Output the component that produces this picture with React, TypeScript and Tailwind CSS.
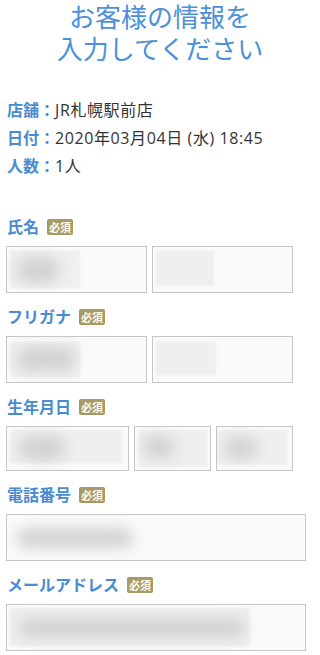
import React from "react";

const font = { fontFamily: '"Open Sans", "Noto Sans CJK JP", sans-serif' };

function Badge() {
  return (
    <span className="ml-[8px] inline-flex h-[16px] w-[26px] items-center justify-center rounded-[2px] bg-[#a89a67] text-[11px] leading-none font-bold text-[#fffbea]">
      必須
    </span>
  );
}

function Label({ text }: { text: string }) {
  return (
    <div className="flex h-[28px] items-center">
      <span className="text-[16px] font-bold leading-none text-[#4a8bd0]">{text}</span>
      <Badge />
    </div>
  );
}

function Field({
  w,
  h = 47,
  blob,
}: {
  w: string;
  h?: number;
  blob: React.ReactNode;
}) {
  return (
    <div className={`${w} relative overflow-hidden border border-[#c6c6c6] bg-[#fafafa]`} style={{ height: h }}>
      {blob}
    </div>
  );
}

const Dark = ({ cls }: { cls: string }) => (
  <div className={`absolute rounded-full bg-[#d2d2d2] blur-[7px] ${cls}`} />
);
const Light = ({ cls }: { cls: string }) => (
  <div className={`absolute bg-[#efefef] blur-[1px] ${cls}`} />
);

export default function App() {
  return (
    <div className="w-[320px] bg-white" style={font}>
      <h1 className="mt-[1px] text-center text-[26px] font-normal text-[#4b90d8]">
        <div className="h-[32px] leading-[32px]">お客様の情報を</div>
        <div className="h-[32px] leading-[32px]">入力してください</div>
      </h1>

      <div className="mt-[31px] pl-[7px] text-[16px] leading-[28px] text-[#333]">
        <div>
          <span className="font-bold text-[#4a8bd0]">店舗：</span>
          <span className="tracking-[0.6px]">JR札幌駅前店</span>
        </div>
        <div>
          <span className="font-bold text-[#4a8bd0]">日付：</span>
          <span className="tracking-[0.6px]">2020年03月04日 (水) 18:45</span>
        </div>
        <div>
          <span className="font-bold text-[#4a8bd0]">人数：</span>
          <span className="tracking-[0.6px]">1人</span>
        </div>
      </div>

      <div className="mt-[33px] pl-[6px]">
        <div className="pl-[1px]">
          <Label text="氏名" />
        </div>
        <div className="mt-[5px] flex gap-[5px]">
          <Field w="w-[141px]" blob={<><Light cls="left-[3px] top-[4px] h-[37px] w-[70px]" /><Dark cls="left-[10px] top-[10px] h-[26px] w-[42px]" /></>} />
          <Field w="w-[141px]" blob={<Light cls="left-[3px] top-[4px] h-[35px] w-[58px]" />} />
        </div>

        <div className="mt-[10px] pl-[1px]">
          <Label text="フリガナ" />
        </div>
        <div className="mt-[5px] flex gap-[5px]">
          <Field w="w-[141px]" blob={<><Light cls="left-[3px] top-[5px] h-[36px] w-[70px]" /><Dark cls="left-[10px] top-[10px] h-[24px] w-[58px]" /></>} />
          <Field w="w-[141px]" blob={<Light cls="left-[3px] top-[5px] h-[33px] w-[60px]" />} />
        </div>

        <div className="mt-[10px] pl-[1px]">
          <Label text="生年月日" />
        </div>
        <div className="mt-[5px] flex gap-[5px]">
          <Field w="w-[123px]" h={45} blob={<><Light cls="left-[3px] top-[3px] h-[33px] w-[112px]" /><Dark cls="left-[12px] top-[9px] h-[24px] w-[46px]" /></>} />
          <Field w="w-[77px]" h={45} blob={<><Light cls="left-[4px] top-[3px] h-[37px] w-[68px]" /><Dark cls="left-[8px] top-[9px] h-[22px] w-[32px]" /></>} />
          <Field w="w-[77px]" h={45} blob={<><Light cls="left-[0px] top-[3px] h-[35px] w-[70px]" /><Dark cls="left-[8px] top-[10px] h-[22px] w-[32px]" /></>} />
        </div>

        <div className="mt-[10px] pl-[1px]">
          <Label text="電話番号" />
        </div>
        <div className="mt-[5px] flex">
          <Field w="w-[300px]" blob={<Dark cls="left-[10px] top-[13px] h-[20px] w-[116px]" />} />
        </div>

        <div className="mt-[10px] pl-[1px]">
          <Label text="メールアドレス" />
        </div>
        <div className="mt-[5px] flex">
          <Field w="w-[300px]" blob={<><Light cls="left-[3px] top-[3px] h-[38px] w-[240px]" /><Dark cls="left-[12px] top-[13px] h-[20px] w-[226px]" /></>} />
        </div>
      </div>
    </div>
  );
}
